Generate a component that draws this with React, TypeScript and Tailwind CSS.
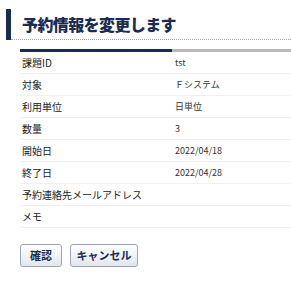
import React from 'react';

const rows: { label: string; value: string }[] = [
  { label: '課題ID', value: 'tst' },
  { label: '対象', value: 'Ｆシステム' },
  { label: '利用単位', value: '日単位' },
  { label: '数量', value: '3' },
  { label: '開始日', value: '2022/04/18' },
  { label: '終了日', value: '2022/04/28' },
  { label: '予約連絡先メールアドレス', value: '' },
  { label: 'メモ', value: '' },
];

const App: React.FC = () => {
  return (
    <div className="w-[291px] h-[300px] bg-white overflow-hidden font-['Liberation_Sans','Noto_Sans_CJK_JP',sans-serif]">
      {/* Page heading */}
      <div className="flex pl-[6px] pt-[9px]">
        <div className="w-[5px] h-[31px] bg-[#1b2c52] shrink-0" />
        <div className="flex-1 h-[31px] border-b border-dotted border-[#9aa3b8] pl-[11px] flex items-center">
          <h1 className="text-[16px] leading-none font-black text-[#1b2c52] tracking-[-0.6px] font-['Noto_Sans_CJK_JP',sans-serif]">
            予約情報を変更します
          </h1>
        </div>
      </div>

      {/* Detail table */}
      <div className="pl-[20px] mt-[9px]">
        <div className="flex h-[3px]">
          <div className="w-[152px] bg-[#1b2c52]" />
          <div className="flex-1 bg-[#b8b8b8]" />
        </div>
        {rows.map((row) => (
          <div key={row.label} className="flex items-center h-[22px] border-b border-[#f0f0f0]">
            <div className="w-[155px] pl-[2px] text-[10px] text-[#222] font-['Noto_Sans_CJK_JP',sans-serif]">
              {row.label}
            </div>
            <div className="text-[9px] text-[#333] font-['Noto_Sans_CJK_JP',sans-serif]">{row.value}</div>
          </div>
        ))}

        {/* Actions */}
        <div className="flex gap-[8px] mt-[16px]">
          <button className="w-[42px] h-[23px] rounded-[3px] border border-[#9aa5bb] bg-gradient-to-b from-white to-[#e2e6ec] text-[11px] font-bold text-[#1b2c52] font-['Noto_Sans_CJK_JP',sans-serif]">
            確認
          </button>
          <button className="w-[68px] h-[23px] rounded-[3px] border border-[#9aa5bb] bg-gradient-to-b from-white to-[#e2e6ec] text-[11px] font-bold text-[#1b2c52] font-['Noto_Sans_CJK_JP',sans-serif]">
            キャンセル
          </button>
        </div>
      </div>
    </div>
  );
};

export default App;
